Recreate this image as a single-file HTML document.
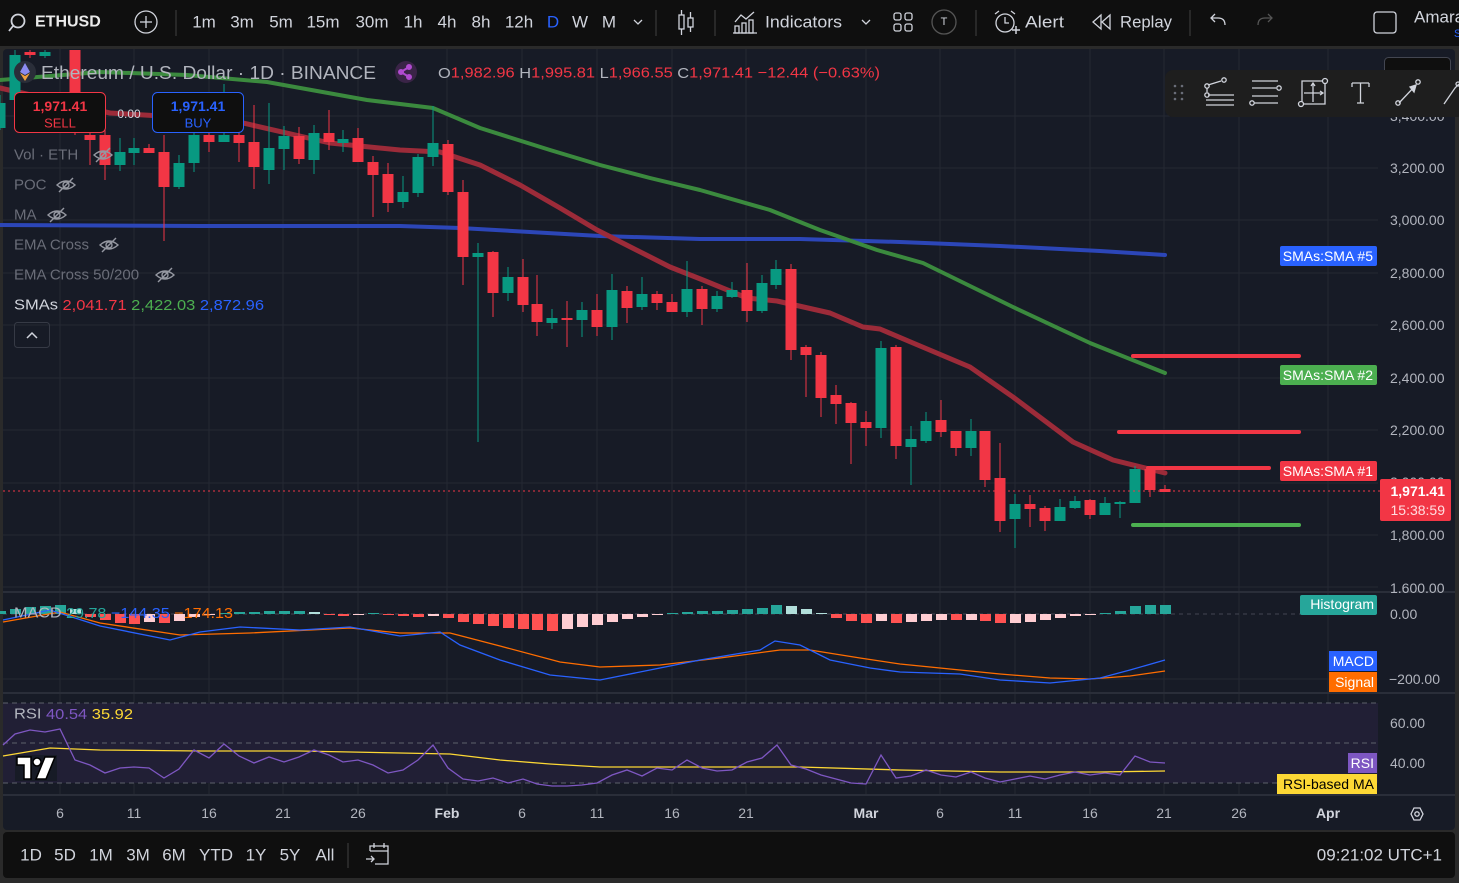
<!DOCTYPE html>
<html><head><meta charset="utf-8"><style>
html,body{margin:0;padding:0;background:#0f0f0f;width:1459px;height:883px;overflow:hidden}
svg{display:block}
text{font-family:"Liberation Sans",sans-serif}
</style></head><body>
<svg width="1459" height="883" viewBox="0 0 1459 883" xmlns="http://www.w3.org/2000/svg">
<rect x="0" y="0" width="1459" height="883" fill="#2a2a2a"/>
<rect x="0" y="0" width="1459" height="46" fill="#0f0f0f"/>
<rect x="3" y="49" width="1452" height="781" rx="4" fill="#171b26"/>
<rect x="3" y="832" width="1452" height="46" rx="4" fill="#0f0f0f"/>

<g stroke="#242833" stroke-width="1">
<line x1="3" x2="1378" y1="116" y2="116"/><line x1="3" x2="1378" y1="168" y2="168"/><line x1="3" x2="1378" y1="220" y2="220"/><line x1="3" x2="1378" y1="273" y2="273"/><line x1="3" x2="1378" y1="325" y2="325"/><line x1="3" x2="1378" y1="378" y2="378"/><line x1="3" x2="1378" y1="430" y2="430"/><line x1="3" x2="1378" y1="483" y2="483"/><line x1="3" x2="1378" y1="535" y2="535"/><line x1="3" x2="1378" y1="587" y2="587"/>
<line x1="3" x2="1378" y1="679" y2="679"/><line x1="3" x2="1378" y1="723" y2="723"/><line x1="3" x2="1378" y1="763" y2="763"/>
<line x1="60" x2="60" y1="49" y2="795"/><line x1="134" x2="134" y1="49" y2="795"/><line x1="209" x2="209" y1="49" y2="795"/><line x1="283" x2="283" y1="49" y2="795"/><line x1="358" x2="358" y1="49" y2="795"/><line x1="447" x2="447" y1="49" y2="795"/><line x1="522" x2="522" y1="49" y2="795"/><line x1="597" x2="597" y1="49" y2="795"/><line x1="672" x2="672" y1="49" y2="795"/><line x1="746" x2="746" y1="49" y2="795"/><line x1="866" x2="866" y1="49" y2="795"/><line x1="940" x2="940" y1="49" y2="795"/><line x1="1015" x2="1015" y1="49" y2="795"/><line x1="1090" x2="1090" y1="49" y2="795"/><line x1="1164" x2="1164" y1="49" y2="795"/><line x1="1239" x2="1239" y1="49" y2="795"/><line x1="1328" x2="1328" y1="49" y2="795"/>
</g>
<g stroke="#2a2e39" stroke-width="2">
<line x1="3" x2="1455" y1="592" y2="592"/><line x1="3" x2="1455" y1="693" y2="693"/><line x1="3" x2="1455" y1="795" y2="795"/>
</g>

<polyline fill="none" stroke="#2c46b8" stroke-width="4" stroke-linecap="round" points="0,225 200,226 400,226 460,228 600,236 700,239 800,239 900,242 1000,246 1100,251 1165,255"/>
<polyline fill="none" stroke="#3b8a3e" stroke-width="4" stroke-linecap="round" stroke-linejoin="round" points="0,80 100,72 187,75 267,82 367,100 433,108 480,128 550,150 600,165 650,178 700,190 770,210 820,230 877,250 923,263 1013,307 1090,343 1165,373"/>
<polyline fill="none" stroke="#9c2b39" stroke-width="5" stroke-linecap="round" stroke-linejoin="round" points="0,88 110,113 230,120 330,143 400,150 440,152 480,165 520,185 560,208 597,230 670,267 703,280 747,298 777,301 830,313 863,327 880,329 913,343 970,367 1013,397 1073,442 1113,460 1165,473"/>

<g fill="#089981">
<rect x="-0.5" y="95" width="1" height="35"/><rect x="-5.5" y="103" width="11" height="25"/>
<rect x="14.5" y="50" width="1" height="55"/><rect x="9.5" y="55" width="11" height="45"/>
<rect x="44.5" y="50" width="1" height="8"/><rect x="39.5" y="52" width="11" height="4"/>
<rect x="119.5" y="138" width="1" height="33"/><rect x="114.5" y="152" width="11" height="13"/>
<rect x="133.5" y="138" width="1" height="27"/><rect x="128.5" y="148" width="11" height="5"/>
<rect x="178.5" y="155" width="1" height="34"/><rect x="173.5" y="163" width="11" height="24"/>
<rect x="193.5" y="130" width="1" height="42"/><rect x="188.5" y="135" width="11" height="28"/>
<rect x="223.5" y="84" width="1" height="58"/><rect x="218.5" y="135" width="11" height="7"/>
<rect x="268.5" y="103" width="1" height="81"/><rect x="263.5" y="148" width="11" height="22"/>
<rect x="283.5" y="126" width="1" height="44"/><rect x="278.5" y="136" width="11" height="13"/>
<rect x="313.5" y="125" width="1" height="49"/><rect x="308.5" y="133" width="11" height="27"/>
<rect x="342.5" y="130" width="1" height="22"/><rect x="337.5" y="139" width="11" height="4"/>
<rect x="402.5" y="176" width="1" height="32"/><rect x="397.5" y="192" width="11" height="10"/>
<rect x="417.5" y="154" width="1" height="43"/><rect x="412.5" y="157" width="11" height="36"/>
<rect x="432.5" y="106" width="1" height="60"/><rect x="427.5" y="143" width="11" height="14"/>
<rect x="477.5" y="243" width="1" height="199"/><rect x="472.5" y="253" width="11" height="4"/>
<rect x="507.5" y="267" width="1" height="34"/><rect x="502.5" y="277" width="11" height="16"/>
<rect x="551.5" y="309" width="1" height="20"/><rect x="546.5" y="318" width="11" height="5"/>
<rect x="581.5" y="302" width="1" height="35"/><rect x="576.5" y="310" width="11" height="10"/>
<rect x="611.5" y="274" width="1" height="66"/><rect x="606.5" y="290" width="11" height="37"/>
<rect x="641.5" y="277" width="1" height="33"/><rect x="636.5" y="294" width="11" height="13"/>
<rect x="686.5" y="261" width="1" height="56"/><rect x="681.5" y="289" width="11" height="23"/>
<rect x="716.5" y="291" width="1" height="21"/><rect x="711.5" y="296" width="11" height="13"/>
<rect x="731.5" y="282" width="1" height="16"/><rect x="726.5" y="290" width="11" height="7"/>
<rect x="761.5" y="275" width="1" height="38"/><rect x="756.5" y="283" width="11" height="28"/>
<rect x="775.5" y="260" width="1" height="29"/><rect x="770.5" y="269" width="11" height="16"/>
<rect x="880.5" y="341" width="1" height="97"/><rect x="875.5" y="348" width="11" height="80"/>
<rect x="910.5" y="426" width="1" height="59"/><rect x="905.5" y="439" width="11" height="8"/>
<rect x="925.5" y="412" width="1" height="31"/><rect x="920.5" y="421" width="11" height="20"/>
<rect x="970.5" y="419" width="1" height="37"/><rect x="965.5" y="431" width="11" height="17"/>
<rect x="1014.5" y="494" width="1" height="54"/><rect x="1009.5" y="504" width="11" height="15"/>
<rect x="1059.5" y="499" width="1" height="22"/><rect x="1054.5" y="507" width="11" height="14"/>
<rect x="1074.5" y="496" width="1" height="13"/><rect x="1069.5" y="501" width="11" height="7"/>
<rect x="1104.5" y="497" width="1" height="18"/><rect x="1099.5" y="503" width="11" height="12"/>
<rect x="1119.5" y="501" width="1" height="17"/><rect x="1114.5" y="502" width="11" height="2"/>
<rect x="1134.5" y="466" width="1" height="37"/><rect x="1129.5" y="469" width="11" height="34"/>
</g>
<g fill="#f23645">
<rect x="29.5" y="50" width="1" height="8"/><rect x="24.5" y="52" width="11" height="3"/>
<rect x="74.5" y="50" width="1" height="85"/><rect x="69.5" y="50" width="11" height="78"/>
<rect x="89.5" y="128" width="1" height="37"/><rect x="84.5" y="135" width="11" height="5"/>
<rect x="104.5" y="130" width="1" height="50"/><rect x="99.5" y="135" width="11" height="30"/>
<rect x="148.5" y="144" width="1" height="9"/><rect x="143.5" y="148" width="11" height="5"/>
<rect x="163.5" y="135" width="1" height="106"/><rect x="158.5" y="152" width="11" height="35"/>
<rect x="208.5" y="128" width="1" height="24"/><rect x="203.5" y="135" width="11" height="7"/>
<rect x="238.5" y="128" width="1" height="34"/><rect x="233.5" y="135" width="11" height="8"/>
<rect x="253.5" y="105" width="1" height="84"/><rect x="248.5" y="142" width="11" height="25"/>
<rect x="298.5" y="127" width="1" height="37"/><rect x="293.5" y="136" width="11" height="23"/>
<rect x="328.5" y="110" width="1" height="40"/><rect x="323.5" y="133" width="11" height="9"/>
<rect x="357.5" y="128" width="1" height="34"/><rect x="352.5" y="138" width="11" height="24"/>
<rect x="372.5" y="156" width="1" height="61"/><rect x="367.5" y="162" width="11" height="13"/>
<rect x="387.5" y="163" width="1" height="49"/><rect x="382.5" y="174" width="11" height="29"/>
<rect x="447.5" y="140" width="1" height="55"/><rect x="442.5" y="144" width="11" height="48"/>
<rect x="462.5" y="180" width="1" height="105"/><rect x="457.5" y="192" width="11" height="65"/>
<rect x="492.5" y="251" width="1" height="66"/><rect x="487.5" y="252" width="11" height="41"/>
<rect x="522.5" y="259" width="1" height="53"/><rect x="517.5" y="277" width="11" height="28"/>
<rect x="536.5" y="275" width="1" height="61"/><rect x="531.5" y="304" width="11" height="18"/>
<rect x="566.5" y="301" width="1" height="46"/><rect x="561.5" y="318" width="11" height="2"/>
<rect x="596.5" y="294" width="1" height="42"/><rect x="591.5" y="310" width="11" height="17"/>
<rect x="626.5" y="286" width="1" height="37"/><rect x="621.5" y="291" width="11" height="17"/>
<rect x="656.5" y="291" width="1" height="19"/><rect x="651.5" y="294" width="11" height="9"/>
<rect x="671.5" y="294" width="1" height="18"/><rect x="666.5" y="302" width="11" height="10"/>
<rect x="701.5" y="286" width="1" height="39"/><rect x="696.5" y="289" width="11" height="20"/>
<rect x="746.5" y="263" width="1" height="59"/><rect x="741.5" y="290" width="11" height="21"/>
<rect x="790.5" y="264" width="1" height="96"/><rect x="785.5" y="269" width="11" height="81"/>
<rect x="805.5" y="345" width="1" height="52"/><rect x="800.5" y="347" width="11" height="8"/>
<rect x="820.5" y="352" width="1" height="65"/><rect x="815.5" y="355" width="11" height="43"/>
<rect x="835.5" y="385" width="1" height="39"/><rect x="830.5" y="395" width="11" height="9"/>
<rect x="850.5" y="402" width="1" height="62"/><rect x="845.5" y="403" width="11" height="20"/>
<rect x="865.5" y="411" width="1" height="35"/><rect x="860.5" y="422" width="11" height="6"/>
<rect x="895.5" y="345" width="1" height="114"/><rect x="890.5" y="347" width="11" height="99"/>
<rect x="940.5" y="400" width="1" height="37"/><rect x="935.5" y="420" width="11" height="12"/>
<rect x="955.5" y="431" width="1" height="25"/><rect x="950.5" y="431" width="11" height="17"/>
<rect x="984.5" y="431" width="1" height="56"/><rect x="979.5" y="431" width="11" height="49"/>
<rect x="999.5" y="443" width="1" height="89"/><rect x="994.5" y="478" width="11" height="43"/>
<rect x="1029.5" y="495" width="1" height="32"/><rect x="1024.5" y="504" width="11" height="5"/>
<rect x="1044.5" y="506" width="1" height="25"/><rect x="1039.5" y="508" width="11" height="13"/>
<rect x="1089.5" y="499" width="1" height="20"/><rect x="1084.5" y="500" width="11" height="15"/>
<rect x="1149.5" y="469" width="1" height="28"/><rect x="1144.5" y="469" width="11" height="21"/>
<rect x="1164.5" y="485" width="1" height="7"/><rect x="1159.5" y="489" width="11" height="3"/>
</g>

<g stroke-width="4" stroke-linecap="round">
<line x1="1133" x2="1299" y1="356" y2="356" stroke="#f23645"/>
<line x1="1119" x2="1299" y1="432" y2="432" stroke="#f23645"/>
<line x1="1148" x2="1269" y1="468" y2="468" stroke="#f23645"/>
<line x1="1133" x2="1299" y1="525" y2="525" stroke="#4caf50"/>
</g>
<line x1="3" x2="1380" y1="491" y2="491" stroke="#f23645" stroke-width="1" stroke-dasharray="2,3"/>

<line x1="3" x2="1378" y1="614" y2="614" stroke="#434651" stroke-dasharray="4,4"/>
<g>
<rect x="-5" y="611" width="11" height="3" fill="#26a69a"/><rect x="10" y="609" width="11" height="5" fill="#26a69a"/><rect x="25" y="607" width="11" height="7" fill="#26a69a"/><rect x="40" y="606" width="11" height="8" fill="#26a69a"/><rect x="55" y="605" width="11" height="9" fill="#26a69a"/><rect x="70" y="609" width="11" height="5" fill="#b2dfdb"/>
<rect x="85" y="614" width="11" height="3" fill="#ff5252"/><rect x="100" y="614" width="11" height="6" fill="#ff5252"/><rect x="115" y="614" width="11" height="9" fill="#ff5252"/><rect x="129" y="614" width="11" height="10" fill="#ff5252"/><rect x="144" y="614" width="11" height="8" fill="#ffcdd2"/><rect x="159" y="614" width="11" height="9" fill="#ff5252"/><rect x="174" y="614" width="11" height="7" fill="#ffcdd2"/><rect x="189" y="614" width="11" height="3" fill="#ffcdd2"/><rect x="204" y="614" width="11" height="1" fill="#ffcdd2"/>
<rect x="219" y="613" width="11" height="1" fill="#26a69a"/><rect x="234" y="612" width="11" height="2" fill="#26a69a"/><rect x="249" y="612" width="11" height="2" fill="#26a69a"/><rect x="264" y="611" width="11" height="3" fill="#26a69a"/><rect x="279" y="611" width="11" height="3" fill="#26a69a"/><rect x="294" y="611" width="11" height="3" fill="#26a69a"/><rect x="309" y="612" width="11" height="2" fill="#b2dfdb"/>
<rect x="324" y="614" width="11" height="1" fill="#ff5252"/><rect x="338" y="614" width="11" height="2" fill="#ff5252"/><rect x="353" y="614" width="11" height="1" fill="#ffcdd2"/><rect x="368" y="613" width="11" height="1" fill="#26a69a"/><rect x="383" y="614" width="11" height="1" fill="#ff5252"/><rect x="398" y="614" width="11" height="2" fill="#ff5252"/><rect x="413" y="614" width="11" height="3" fill="#ff5252"/><rect x="428" y="614" width="11" height="2" fill="#ffcdd2"/>
<rect x="443" y="614" width="11" height="4" fill="#ff5252"/><rect x="458" y="614" width="11" height="8" fill="#ff5252"/><rect x="473" y="614" width="11" height="10" fill="#ff5252"/><rect x="488" y="614" width="11" height="12" fill="#ff5252"/><rect x="503" y="614" width="11" height="14" fill="#ff5252"/><rect x="518" y="614" width="11" height="15" fill="#ff5252"/><rect x="532" y="614" width="11" height="16" fill="#ff5252"/><rect x="547" y="614" width="11" height="17" fill="#ff5252"/><rect x="562" y="614" width="11" height="15" fill="#ffcdd2"/><rect x="577" y="614" width="11" height="13" fill="#ffcdd2"/><rect x="592" y="614" width="11" height="11" fill="#ffcdd2"/><rect x="607" y="614" width="11" height="8" fill="#ffcdd2"/><rect x="622" y="614" width="11" height="5" fill="#ffcdd2"/><rect x="637" y="614" width="11" height="3" fill="#ffcdd2"/><rect x="652" y="614" width="11" height="1" fill="#ffcdd2"/>
<rect x="667" y="613" width="11" height="1" fill="#26a69a"/><rect x="682" y="612" width="11" height="2" fill="#26a69a"/><rect x="697" y="611" width="11" height="3" fill="#26a69a"/><rect x="712" y="611" width="11" height="3" fill="#26a69a"/><rect x="727" y="610" width="11" height="4" fill="#26a69a"/><rect x="742" y="609" width="11" height="5" fill="#26a69a"/><rect x="757" y="608" width="11" height="6" fill="#26a69a"/><rect x="771" y="605" width="11" height="9" fill="#26a69a"/><rect x="786" y="606" width="11" height="8" fill="#b2dfdb"/><rect x="801" y="609" width="11" height="5" fill="#b2dfdb"/><rect x="816" y="613" width="11" height="1" fill="#b2dfdb"/>
<rect x="831" y="614" width="11" height="4" fill="#ff5252"/><rect x="846" y="614" width="11" height="7" fill="#ff5252"/><rect x="861" y="614" width="11" height="9" fill="#ff5252"/><rect x="876" y="614" width="11" height="7" fill="#ffcdd2"/><rect x="891" y="614" width="11" height="9" fill="#ff5252"/><rect x="906" y="614" width="11" height="8" fill="#ffcdd2"/><rect x="921" y="614" width="11" height="7" fill="#ffcdd2"/><rect x="936" y="614" width="11" height="6" fill="#ffcdd2"/><rect x="951" y="614" width="11" height="6" fill="#ff5252"/><rect x="966" y="614" width="11" height="6" fill="#ffcdd2"/><rect x="980" y="614" width="11" height="7" fill="#ff5252"/><rect x="995" y="614" width="11" height="9" fill="#ff5252"/><rect x="1010" y="614" width="11" height="9" fill="#ffcdd2"/><rect x="1025" y="614" width="11" height="8" fill="#ffcdd2"/><rect x="1040" y="614" width="11" height="6" fill="#ffcdd2"/><rect x="1055" y="614" width="11" height="4" fill="#ffcdd2"/><rect x="1070" y="614" width="11" height="2" fill="#ffcdd2"/><rect x="1085" y="614" width="11" height="1" fill="#ffcdd2"/>
<rect x="1100" y="613" width="11" height="1" fill="#26a69a"/><rect x="1115" y="611" width="11" height="3" fill="#26a69a"/><rect x="1130" y="606" width="11" height="8" fill="#26a69a"/><rect x="1145" y="605" width="11" height="9" fill="#26a69a"/><rect x="1160" y="605" width="11" height="9" fill="#26a69a"/>
</g>
<polyline fill="none" stroke="#ff6d00" stroke-width="1.3" points="3,622 60,612 100,623 180,635 250,633 350,628 400,633 450,633 500,646 560,662 600,667 660,665 720,658 780,650 810,650 860,658 900,664 960,670 1000,674 1050,678 1090,679 1130,676 1165,671"/>
<polyline fill="none" stroke="#2962ff" stroke-width="1.3" points="3,620 50,610 100,626 170,640 200,632 240,627 300,630 350,627 400,636 440,632 460,645 500,660 550,675 600,680 660,668 700,660 760,650 775,641 800,645 830,660 870,668 900,672 960,674 1000,680 1050,683 1100,678 1130,670 1165,660"/>

<rect x="3" y="703" width="1375" height="80" fill="#211f35"/>
<g stroke="#5d606b" stroke-dasharray="5,4"><line x1="3" x2="1378" y1="703" y2="703"/><line x1="3" x2="1378" y1="743" y2="743"/><line x1="3" x2="1378" y1="783" y2="783"/></g>
<polyline fill="none" stroke="#fdd835" stroke-width="1.3" points="3,756 50,748 100,750 200,751 300,751 400,753 450,754 500,760 550,764 600,767 700,767 800,767 900,770 1000,772 1100,772 1165,771"/>
<polyline fill="none" stroke="#7e57c2" stroke-width="1.3" points="3,745 15,734 30,730 45,732 60,729 75,760 90,765 105,773 120,768 134,767 149,768 164,778 179,769 194,750 209,758 224,744 239,756 254,763 269,757 284,762 299,757 314,750 329,755 343,762 358,760 373,765 388,773 403,770 418,760 433,745 448,768 463,779 478,781 493,778 508,783 523,779 537,784 552,786 567,786 582,785 597,783 612,775 627,770 642,776 657,768 672,770 687,760 702,768 717,771 732,770 747,762 762,758 777,745 791,765 806,769 821,775 836,779 851,783 866,784 881,755 896,778 911,776 926,770 941,775 956,777 971,772 985,778 1000,782 1015,779 1030,776 1045,779 1060,775 1075,772 1090,775 1105,773 1120,775 1135,756 1150,762 1165,763"/>
<g transform="translate(17,757)">
<rect x="-2" y="-2" width="42" height="26" fill="#171b26"/>
<path d="M0 0 H14 V22 H7 V8 H0 Z" fill="#fff" stroke="#000" stroke-width="1.5"/>
<circle cx="20" cy="5" r="4" fill="#fff" stroke="#000" stroke-width="1.5"/>
<path d="M28 0 H38 L29 22 H19 Z" fill="#fff" stroke="#000" stroke-width="1.5"/>
</g>

<g fill="#b2b5be" font-size="14" dominant-baseline="central">
<text x="1390" y="116">3,400.00</text><text x="1390" y="168">3,200.00</text><text x="1390" y="220">3,000.00</text><text x="1390" y="273">2,800.00</text><text x="1390" y="325">2,600.00</text><text x="1390" y="378">2,400.00</text><text x="1390" y="430">2,200.00</text><text x="1390" y="482">2,000.00</text><text x="1390" y="535">1,800.00</text><text x="1390" y="588">1,600.00</text>
<text x="1390" y="614">0.00</text><text x="1389" y="679">−200.00</text><text x="1390" y="723">60.00</text><text x="1390" y="763">40.00</text>
</g>
<rect x="1380" y="593" width="75" height="5" fill="#171b26"/>
<rect x="1380" y="479" width="71" height="42" rx="2" fill="#f23645"/>
<text x="1445" y="491" fill="#fff" font-size="14" font-weight="bold" text-anchor="end" dominant-baseline="central">1,971.41</text>
<text x="1445" y="510" fill="#ffdde0" font-size="14" text-anchor="end" dominant-baseline="central">15:38:59</text>

<g font-size="14" dominant-baseline="central" text-anchor="end">
<rect x="1280" y="246" width="97" height="20" rx="2" fill="#2962ff"/><text x="1373" y="256" fill="#fff">SMAs:SMA #5</text>
<rect x="1280" y="365" width="97" height="20" rx="2" fill="#4caf50"/><text x="1373" y="375" fill="#fff">SMAs:SMA #2</text>
<rect x="1280" y="461" width="97" height="20" rx="2" fill="#f23645"/><text x="1373" y="471" fill="#fff">SMAs:SMA #1</text>
<rect x="1300" y="595" width="77" height="20" rx="2" fill="#26a69a"/><text x="1374" y="604" fill="#fff">Histogram</text>
<rect x="1329" y="651" width="48" height="20" fill="#2962ff"/><text x="1374" y="661" fill="#fff">MACD</text>
<rect x="1329" y="672" width="48" height="20" fill="#ff6d00"/><text x="1374" y="682" fill="#fff">Signal</text>
<rect x="1348" y="753" width="29" height="20" fill="#7e57c2"/><text x="1374" y="763" fill="#fff">RSI</text>
<rect x="1277" y="774" width="100" height="20" fill="#fdd835"/><text x="1374" y="784" fill="#000">RSI-based MA</text>
</g>

<g fill="#b2b5be" font-size="14" text-anchor="middle" dominant-baseline="central">
<text x="60" y="813">6</text><text x="134" y="813">11</text><text x="209" y="813">16</text><text x="283" y="813">21</text><text x="358" y="813">26</text><text x="447" y="813" font-weight="bold" fill="#d1d4dc">Feb</text><text x="522" y="813">6</text><text x="597" y="813">11</text><text x="672" y="813">16</text><text x="746" y="813">21</text><text x="866" y="813" font-weight="bold" fill="#d1d4dc">Mar</text><text x="940" y="813">6</text><text x="1015" y="813">11</text><text x="1090" y="813">16</text><text x="1164" y="813">21</text><text x="1239" y="813">26</text><text x="1328" y="813" font-weight="bold" fill="#d1d4dc">Apr</text>
</g>
<path d="M1411 814 L1414 808 H1420 L1423 814 L1420 820 H1414 Z" fill="none" stroke="#d1d4dc" stroke-width="1.3"/><circle cx="1417" cy="814" r="2.2" fill="none" stroke="#d1d4dc" stroke-width="1.3"/>

<circle cx="25" cy="72" r="11" fill="#2a2e39"/>
<path d="M25 63 L30 72 L25 75 L20 72 Z" fill="#8c8cf0"/><path d="M20 73 L25 76 L30 73 L25 81 Z" fill="#f0a040"/>
<text x="41" y="73" fill="#b2b5be" font-size="18" dominant-baseline="central" textLength="335" lengthAdjust="spacingAndGlyphs">Ethereum / U.S. Dollar · 1D · BINANCE</text>
<circle cx="406" cy="72" r="11" fill="#3a2447"/>
<g stroke="#b04bd0" stroke-width="2" fill="#b04bd0"><line x1="401" y1="72" x2="409" y2="67"/><line x1="401" y1="72" x2="409" y2="77"/><circle cx="401" cy="72" r="2"/><circle cx="409" cy="67" r="2"/><circle cx="409" cy="77" r="2"/></g>
<text x="438" y="73" font-size="15" dominant-baseline="central" fill="#f23645" textLength="442" lengthAdjust="spacingAndGlyphs"><tspan fill="#b2b5be">O</tspan>1,982.96 <tspan fill="#b2b5be">H</tspan>1,995.81 <tspan fill="#b2b5be">L</tspan>1,966.55 <tspan fill="#b2b5be">C</tspan>1,971.41 −12.44 (−0.63%)</text>

<rect x="14.5" y="92.5" width="91" height="40" rx="5" fill="#0f0f0f" stroke="#f23645"/>
<text x="60" y="106" fill="#f23645" font-size="14" font-weight="bold" text-anchor="middle" dominant-baseline="central">1,971.41</text>
<text x="60" y="123" fill="#f23645" font-size="13" text-anchor="middle" dominant-baseline="central">SELL</text>
<text x="129" y="114" fill="#d1d4dc" font-size="12" text-anchor="middle" dominant-baseline="central">0.00</text>
<rect x="152.5" y="92.5" width="91" height="40" rx="5" fill="#0f0f0f" stroke="#2962ff"/>
<text x="198" y="106" fill="#2962ff" font-size="14" font-weight="bold" text-anchor="middle" dominant-baseline="central">1,971.41</text>
<text x="198" y="123" fill="#2962ff" font-size="13" text-anchor="middle" dominant-baseline="central">BUY</text>

<g font-size="15" dominant-baseline="central" fill="#6a6d78">
<text x="14" y="155">Vol · ETH</text><text x="14" y="185">POC</text><text x="14" y="215">MA</text><text x="14" y="245">EMA Cross</text><text x="14" y="275">EMA Cross 50/200</text>
<text x="14" y="305" fill="#d1d4dc" textLength="250" lengthAdjust="spacingAndGlyphs">SMAs <tspan fill="#f23645">2,041.71</tspan> <tspan fill="#4caf50">2,422.03</tspan> <tspan fill="#2962ff">2,872.96</tspan></text>
</g>
<g fill="none" stroke="#9598a1" stroke-width="1.4">
<g transform="translate(103,155)"><path d="M-9 0 Q0 -8 9 0 Q0 8 -9 0 Z"/><circle r="3"/><line x1="-7" y1="7" x2="7" y2="-7"/></g>
<g transform="translate(66,185)"><path d="M-9 0 Q0 -8 9 0 Q0 8 -9 0 Z"/><circle r="3"/><line x1="-7" y1="7" x2="7" y2="-7"/></g>
<g transform="translate(57,215)"><path d="M-9 0 Q0 -8 9 0 Q0 8 -9 0 Z"/><circle r="3"/><line x1="-7" y1="7" x2="7" y2="-7"/></g>
<g transform="translate(109,245)"><path d="M-9 0 Q0 -8 9 0 Q0 8 -9 0 Z"/><circle r="3"/><line x1="-7" y1="7" x2="7" y2="-7"/></g>
<g transform="translate(165,275)"><path d="M-9 0 Q0 -8 9 0 Q0 8 -9 0 Z"/><circle r="3"/><line x1="-7" y1="7" x2="7" y2="-7"/></g>
</g>
<rect x="14.5" y="322.5" width="35" height="25" rx="3" fill="none" stroke="#363a45"/>
<path d="M27 338 L32 333 L37 338" fill="none" stroke="#d1d4dc" stroke-width="1.5"/>

<g font-size="15" dominant-baseline="central">
<text x="14" y="613" fill="#b2b5be" textLength="219" lengthAdjust="spacingAndGlyphs">MACD <tspan fill="#26a69a">29.78</tspan> <tspan fill="#2962ff">−144.35</tspan> <tspan fill="#ff6d00">−174.13</tspan></text>
<text x="14" y="714" fill="#b2b5be" textLength="119" lengthAdjust="spacingAndGlyphs">RSI <tspan fill="#7e57c2">40.54</tspan> <tspan fill="#fdd835">35.92</tspan></text>
</g>

<rect x="1384.5" y="57.5" width="66" height="30" rx="4" fill="#0f0f0f" stroke="#434651"/>
<rect x="1165" y="70" width="300" height="47" rx="8" fill="#1e1e1e"/>
<g fill="#6a6d78"><circle cx="1175" cy="86" r="1.3"/><circle cx="1182" cy="86" r="1.3"/><circle cx="1175" cy="93" r="1.3"/><circle cx="1182" cy="93" r="1.3"/><circle cx="1175" cy="99" r="1.3"/><circle cx="1182" cy="99" r="1.3"/></g>
<g fill="none" stroke="#d1d4dc" stroke-width="1.3">
<line x1="1208" y1="95" x2="1234" y2="95"/><line x1="1206" y1="100" x2="1234" y2="100"/><line x1="1206" y1="105" x2="1234" y2="105"/><line x1="1208" y1="85" x2="1221" y2="81"/><line x1="1207" y1="88" x2="1207" y2="92"/><circle cx="1207" cy="86" r="2.2"/><circle cx="1207" cy="95" r="2.2"/><circle cx="1224" cy="80" r="2.2"/>
<line x1="1252" y1="81" x2="1278" y2="81"/><line x1="1252" y1="88" x2="1276" y2="88"/><line x1="1252" y1="96" x2="1278" y2="96"/><line x1="1254" y1="103" x2="1278" y2="103"/><circle cx="1279" cy="88" r="2.2"/><circle cx="1252" cy="103" r="2.2"/>
<path d="M1302 104 V81 H1325 V104 Z"/><line x1="1313" y1="84" x2="1313" y2="102"/><line x1="1304" y1="93" x2="1322" y2="93"/><path d="M1311 86 L1313 83 L1315 86"/><path d="M1320 91 L1323 93 L1320 95"/><circle cx="1301" cy="104" r="2.5" fill="#1e1e1e"/><circle cx="1325" cy="81" r="2.5" fill="#1e1e1e"/>
<path d="M1352 83 H1369 M1352 83 V87 M1369 83 V87 M1360.5 83 V103 M1357 103 H1364"/>
<line x1="1399" y1="103" x2="1416" y2="85"/><circle cx="1398" cy="103" r="2.2"/><circle cx="1418" cy="82" r="2.2"/><path d="M1410 87 L1416 85 L1414 92 Z" fill="#d1d4dc"/>
<path d="M1444 104 L1455 88 L1459 84"/><circle cx="1458" cy="84" r="2"/>
</g>

<g fill="none" stroke="#d1d4dc" stroke-width="1.8">
<circle cx="18" cy="21" r="6.5"/><line x1="13" y1="26" x2="9" y2="31"/>
<circle cx="146" cy="22" r="11" stroke-width="1.3"/><line x1="146" y1="16" x2="146" y2="28" stroke-width="1.3"/><line x1="140" y1="22" x2="152" y2="22" stroke-width="1.3"/>
</g>
<text x="35" y="22" fill="#eaeaea" font-size="16" font-weight="bold" dominant-baseline="central">ETHUSD</text>
<g stroke="#363636" stroke-width="1.3"><line x1="176" y1="10" x2="176" y2="36"/><line x1="656" y1="10" x2="656" y2="36"/><line x1="715" y1="10" x2="715" y2="36"/><line x1="976" y1="10" x2="976" y2="36"/><line x1="1190" y1="10" x2="1190" y2="36"/></g>
<g fill="#d1d4dc" font-size="17" dominant-baseline="central" text-anchor="middle">
<text x="204" y="22">1m</text><text x="242" y="22">3m</text><text x="281" y="22">5m</text><text x="323" y="22">15m</text><text x="372" y="22">30m</text><text x="413" y="22">1h</text><text x="447" y="22">4h</text><text x="481" y="22">8h</text><text x="519" y="22">12h</text><text x="553" y="22" fill="#2962ff">D</text><text x="580" y="22">W</text><text x="609" y="22">M</text>
</g>
<path d="M634 20 L638 24 L642 20" fill="none" stroke="#d1d4dc" stroke-width="1.3"/>
<g fill="none" stroke="#d1d4dc" stroke-width="1.3">
<rect x="679" y="15" width="5" height="14"/><line x1="681.5" y1="10" x2="681.5" y2="15"/><line x1="681.5" y1="29" x2="681.5" y2="35"/>
<rect x="688" y="18" width="5" height="9"/><line x1="690.5" y1="12" x2="690.5" y2="18"/><line x1="690.5" y1="27" x2="690.5" y2="32"/>
<path d="M735 22 L741 15 L746 19 L754 12"/><rect x="735" y="26" width="4" height="7"/><rect x="742" y="23" width="4" height="10"/><rect x="749" y="20" width="4" height="13"/><line x1="733" y1="33" x2="757" y2="33"/>
<path d="M862 20 L866 24 L870 20"/>
<rect x="894" y="13" width="7" height="7" rx="2"/><rect x="905" y="13" width="7" height="7" rx="2"/><rect x="894" y="24" width="7" height="7" rx="2"/><rect x="905" y="24" width="7" height="7" rx="2"/>
<circle cx="944" cy="22" r="12" stroke="#555"/>
<circle cx="1005" cy="23" r="9"/><path d="M1005 17 V23 H1009"/><path d="M995 14 L999 11 M1015 14 L1011 11"/><path d="M1012 30 H1020 M1016 26 V34" stroke-width="1.5"/>
<path d="M1101 15 L1093 22 L1101 29 Z M1110 15 L1102 22 L1110 29 Z"/>
<path d="M1225 25 Q1225 18 1218 18 H1212 M1215 14 L1211 18 L1215 22"/>
<path d="M1258 25 Q1258 18 1265 18 H1271 M1268 14 L1272 18 L1268 22" stroke="#555"/>
<rect x="1374" y="12" width="22" height="21" rx="3"/>
</g>
<text x="944" y="22" fill="#d1d4dc" font-size="11" text-anchor="middle" dominant-baseline="central">T</text>
<g fill="#d1d4dc" font-size="17" dominant-baseline="central">
<text x="765" y="22" textLength="77" lengthAdjust="spacingAndGlyphs">Indicators</text><text x="1025" y="22" textLength="39" lengthAdjust="spacingAndGlyphs">Alert</text><text x="1120" y="22" textLength="52" lengthAdjust="spacingAndGlyphs">Replay</text><text x="1414" y="17">Amara</text>
</g>
<text x="1454" y="34" fill="#2962ff" font-size="11" dominant-baseline="central">S</text>

<g fill="#d1d4dc" font-size="17" dominant-baseline="central" text-anchor="middle">
<text x="31" y="855">1D</text><text x="65" y="855">5D</text><text x="101" y="855">1M</text><text x="138" y="855">3M</text><text x="174" y="855">6M</text><text x="216" y="855">YTD</text><text x="256" y="855">1Y</text><text x="290" y="855">5Y</text><text x="325" y="855">All</text>
</g>
<line x1="348" y1="843" x2="348" y2="868" stroke="#363636" stroke-width="1.3"/>
<g fill="none" stroke="#d1d4dc" stroke-width="1.3"><path d="M370 851 V846 H388 V864 H375"/><line x1="370" y1="851" x2="388" y2="851"/><line x1="374" y1="843" x2="374" y2="848"/><line x1="384" y1="843" x2="384" y2="848"/><path d="M366 859 H374 M371 856 L374 859 L371 862"/></g>
<text x="1442" y="855" fill="#d1d4dc" font-size="17" text-anchor="end" dominant-baseline="central">09:21:02 UTC+1</text>
</svg>
</body></html>
